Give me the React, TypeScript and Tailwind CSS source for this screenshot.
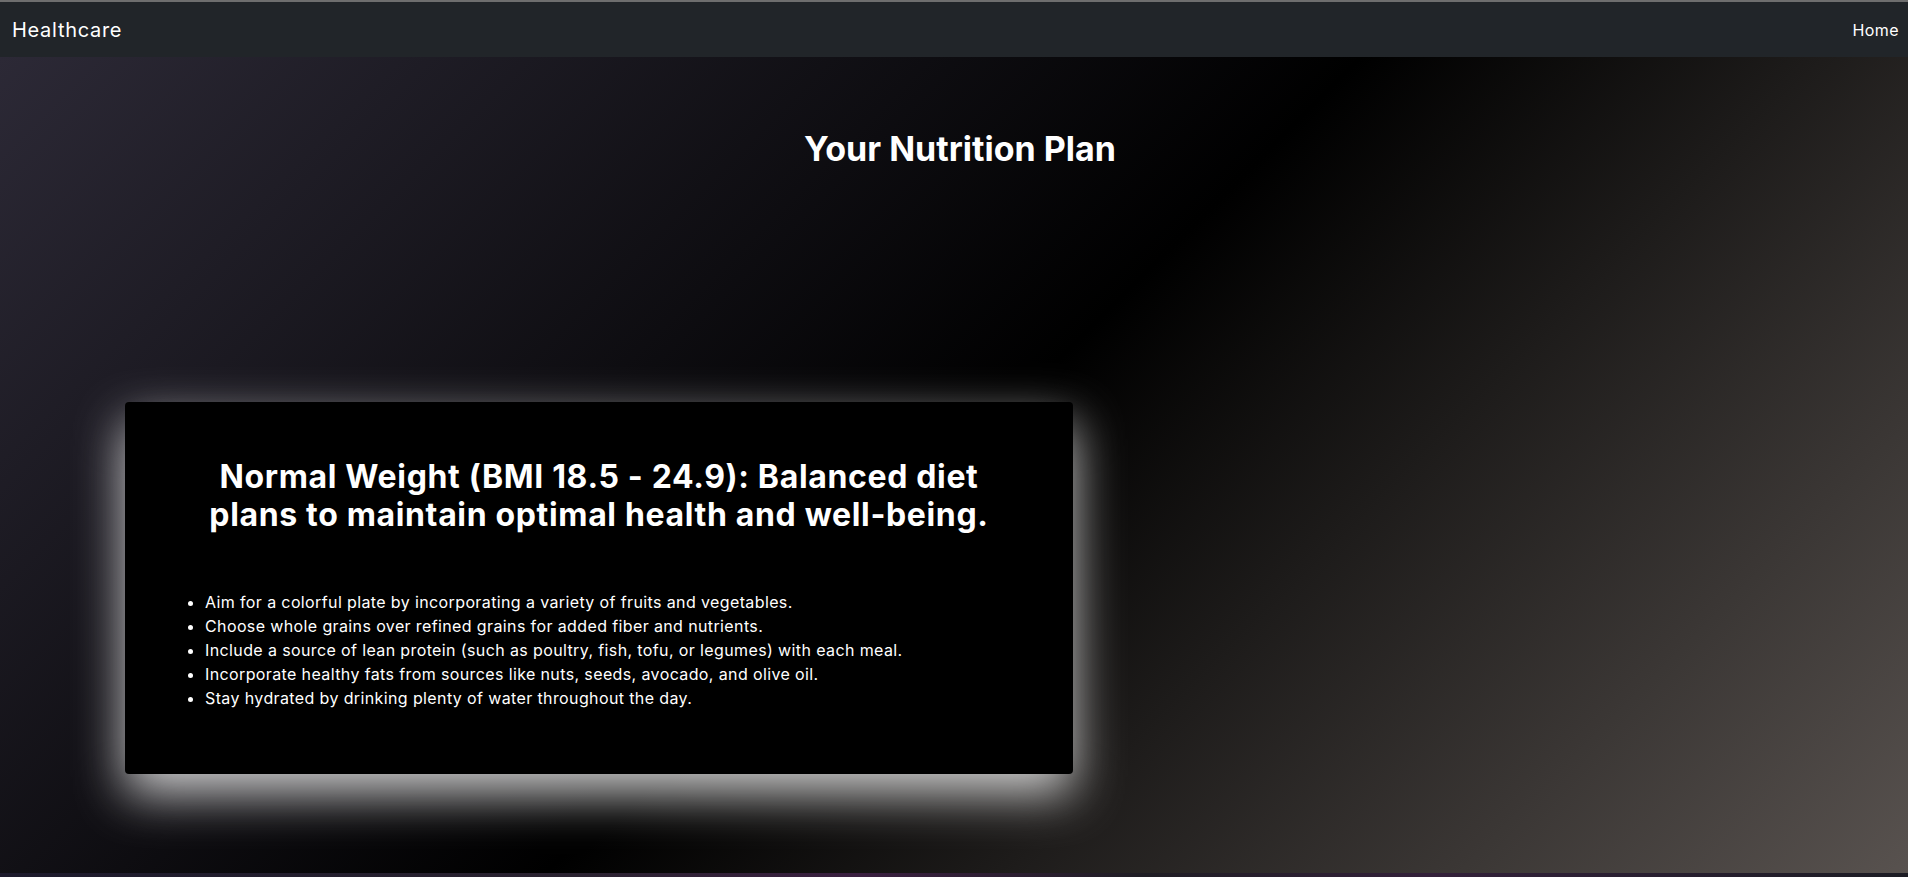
const tips = [
  "Aim for a colorful plate by incorporating a variety of fruits and vegetables.",
  "Choose whole grains over refined grains for added fiber and nutrients.",
  "Include a source of lean protein (such as poultry, fish, tofu, or legumes) with each meal.",
  "Incorporate healthy fats from sources like nuts, seeds, avocado, and olive oil.",
  "Stay hydrated by drinking plenty of water throughout the day.",
];

export default function App() {
  return (
    <div className="min-h-screen bg-black font-['Inter',sans-serif] text-white">
      <div className="h-[2px] bg-[#6e6e6e]" />
      <nav className="flex h-[55px] items-center justify-between bg-[#212529] pl-3 pr-[9px]">
        <span className="text-[20px] tracking-[0.7px]">Healthcare</span>
        <a className="text-[16px] tracking-[0.4px]">Home</a>
      </nav>

      <main className="h-[816px] bg-[linear-gradient(135deg,#2c2936_0%,#000000_50%,#58524f_100%)] pt-[72px]">
        <h2 className="pl-3 text-center text-[34px] font-bold leading-[1.2]">Your Nutrition Plan</h2>

        <div className="mt-[232px] ml-[125px] w-[948px] rounded-[4px] bg-black px-12 pt-[56px] pb-[64px] shadow-[0_20px_50px_rgba(255,255,255,0.8)]">
          <h2 className="text-center text-[32px] font-bold leading-[1.2] tracking-[0.65px]">
            Normal Weight (BMI 18.5 - 24.9): Balanced diet
            <br />
            plans to maintain optimal health and well-being.
          </h2>
          <ul className="mt-[55px] list-disc pl-8 text-[16px] leading-[24px] tracking-[0.38px]">
            {tips.map((t) => (
              <li key={t}>{t}</li>
            ))}
          </ul>
        </div>
      </main>

      <div className="h-[6px] bg-[linear-gradient(90deg,#1c1a2c,#2a2230_30%,#3a1f40_45%,#1f1d24_60%,#33203a_75%,#1c1c24)]" />
    </div>
  );
}
